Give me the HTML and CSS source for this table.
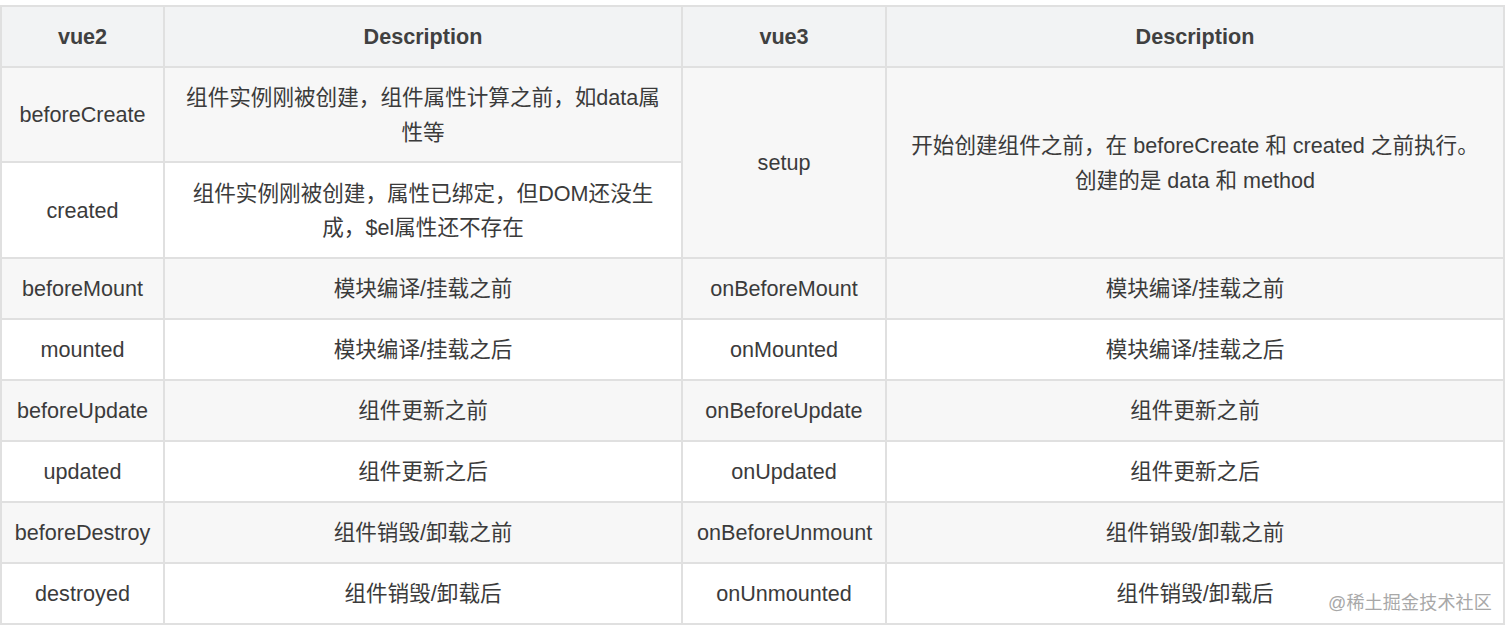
FILE: index.html
```html
<!DOCTYPE html>
<html lang="zh-CN">
<head>
<meta charset="utf-8">
<title>vue2 vs vue3 lifecycle</title>
<link rel="stylesheet" href="styles.css">
</head>
<body>
<div class="page">
  <table class="lifecycle">
    <colgroup>
      <col class="c1"><col class="c2"><col class="c3"><col class="c4">
    </colgroup>
    <thead>
      <tr class="head">
        <th>vue2</th><th>Description</th><th>vue3</th><th>Description</th>
      </tr>
    </thead>
    <tbody>
      <tr class="tall odd">
        <td>beforeCreate</td>
        <td>组件实例刚被创建，组件属性计算之前，如data属性等</td>
        <td rowspan="2">setup</td>
        <td rowspan="2">开始创建组件之前，在 beforeCreate 和 created 之前执行。创建的是 data 和 method</td>
      </tr>
      <tr class="tall2 even">
        <td>created</td>
        <td>组件实例刚被创建，属性已绑定，但DOM还没生成，$el属性还不存在</td>
      </tr>
      <tr class="odd">
        <td>beforeMount</td><td>模块编译/挂载之前</td><td>onBeforeMount</td><td>模块编译/挂载之前</td>
      </tr>
      <tr class="even">
        <td>mounted</td><td>模块编译/挂载之后</td><td>onMounted</td><td>模块编译/挂载之后</td>
      </tr>
      <tr class="odd">
        <td>beforeUpdate</td><td>组件更新之前</td><td>onBeforeUpdate</td><td>组件更新之前</td>
      </tr>
      <tr class="even">
        <td>updated</td><td>组件更新之后</td><td>onUpdated</td><td>组件更新之后</td>
      </tr>
      <tr class="odd">
        <td>beforeDestroy</td><td>组件销毁/卸载之前</td><td>onBeforeUnmount</td><td>组件销毁/卸载之前</td>
      </tr>
      <tr class="even">
        <td>destroyed</td><td>组件销毁/卸载后</td><td>onUnmounted</td><td>组件销毁/卸载后</td>
      </tr>
    </tbody>
  </table>
  <div class="watermark">@稀土掘金技术社区</div>
</div>
</body>
</html>
```
FILE: styles.css
```css
html, body {
  margin: 0;
  padding: 0;
  background: #ffffff;
}

.page {
  position: relative;
  width: 1512px;
  height: 629px;
  padding-top: 5px;
  box-sizing: border-box;
}

.lifecycle {
  border-collapse: collapse;
  table-layout: fixed;
  width: 1503px;
  font-family: "Liberation Sans", Arial, "Noto Sans CJK SC", sans-serif;
  font-size: 21.6px;
  line-height: 34.5px;
  color: #3b3b3b;
}

.c1 { width: 163px; }
.c2 { width: 518px; }
.c3 { width: 204px; }
.c4 { width: 618px; }

.lifecycle th,
.lifecycle td {
  border: 2px solid #e0e0e0;
  text-align: center;
  vertical-align: middle;
  padding: 2px 14px 0;
}

.lifecycle th {
  font-weight: bold;
  color: #404040;
}

.head {
  height: 61px;
  background: #f2f3f4;
}

.lifecycle tbody tr {
  height: 61px;
}

.lifecycle tbody tr.tall {
  height: 95px;
}

.lifecycle tbody tr.tall2 {
  height: 96px;
}

.odd { background: #f7f7f7; }
.even { background: #ffffff; }

.lifecycle td:first-child {
  padding: 2px 6px 0;
}

.watermark {
  position: absolute;
  right: 20px;
  top: 588px;
  font-family: "Liberation Sans", "Noto Sans CJK SC", sans-serif;
  font-size: 18px;
  color: #a8a8a8;
  letter-spacing: 0.2px;
}
```
